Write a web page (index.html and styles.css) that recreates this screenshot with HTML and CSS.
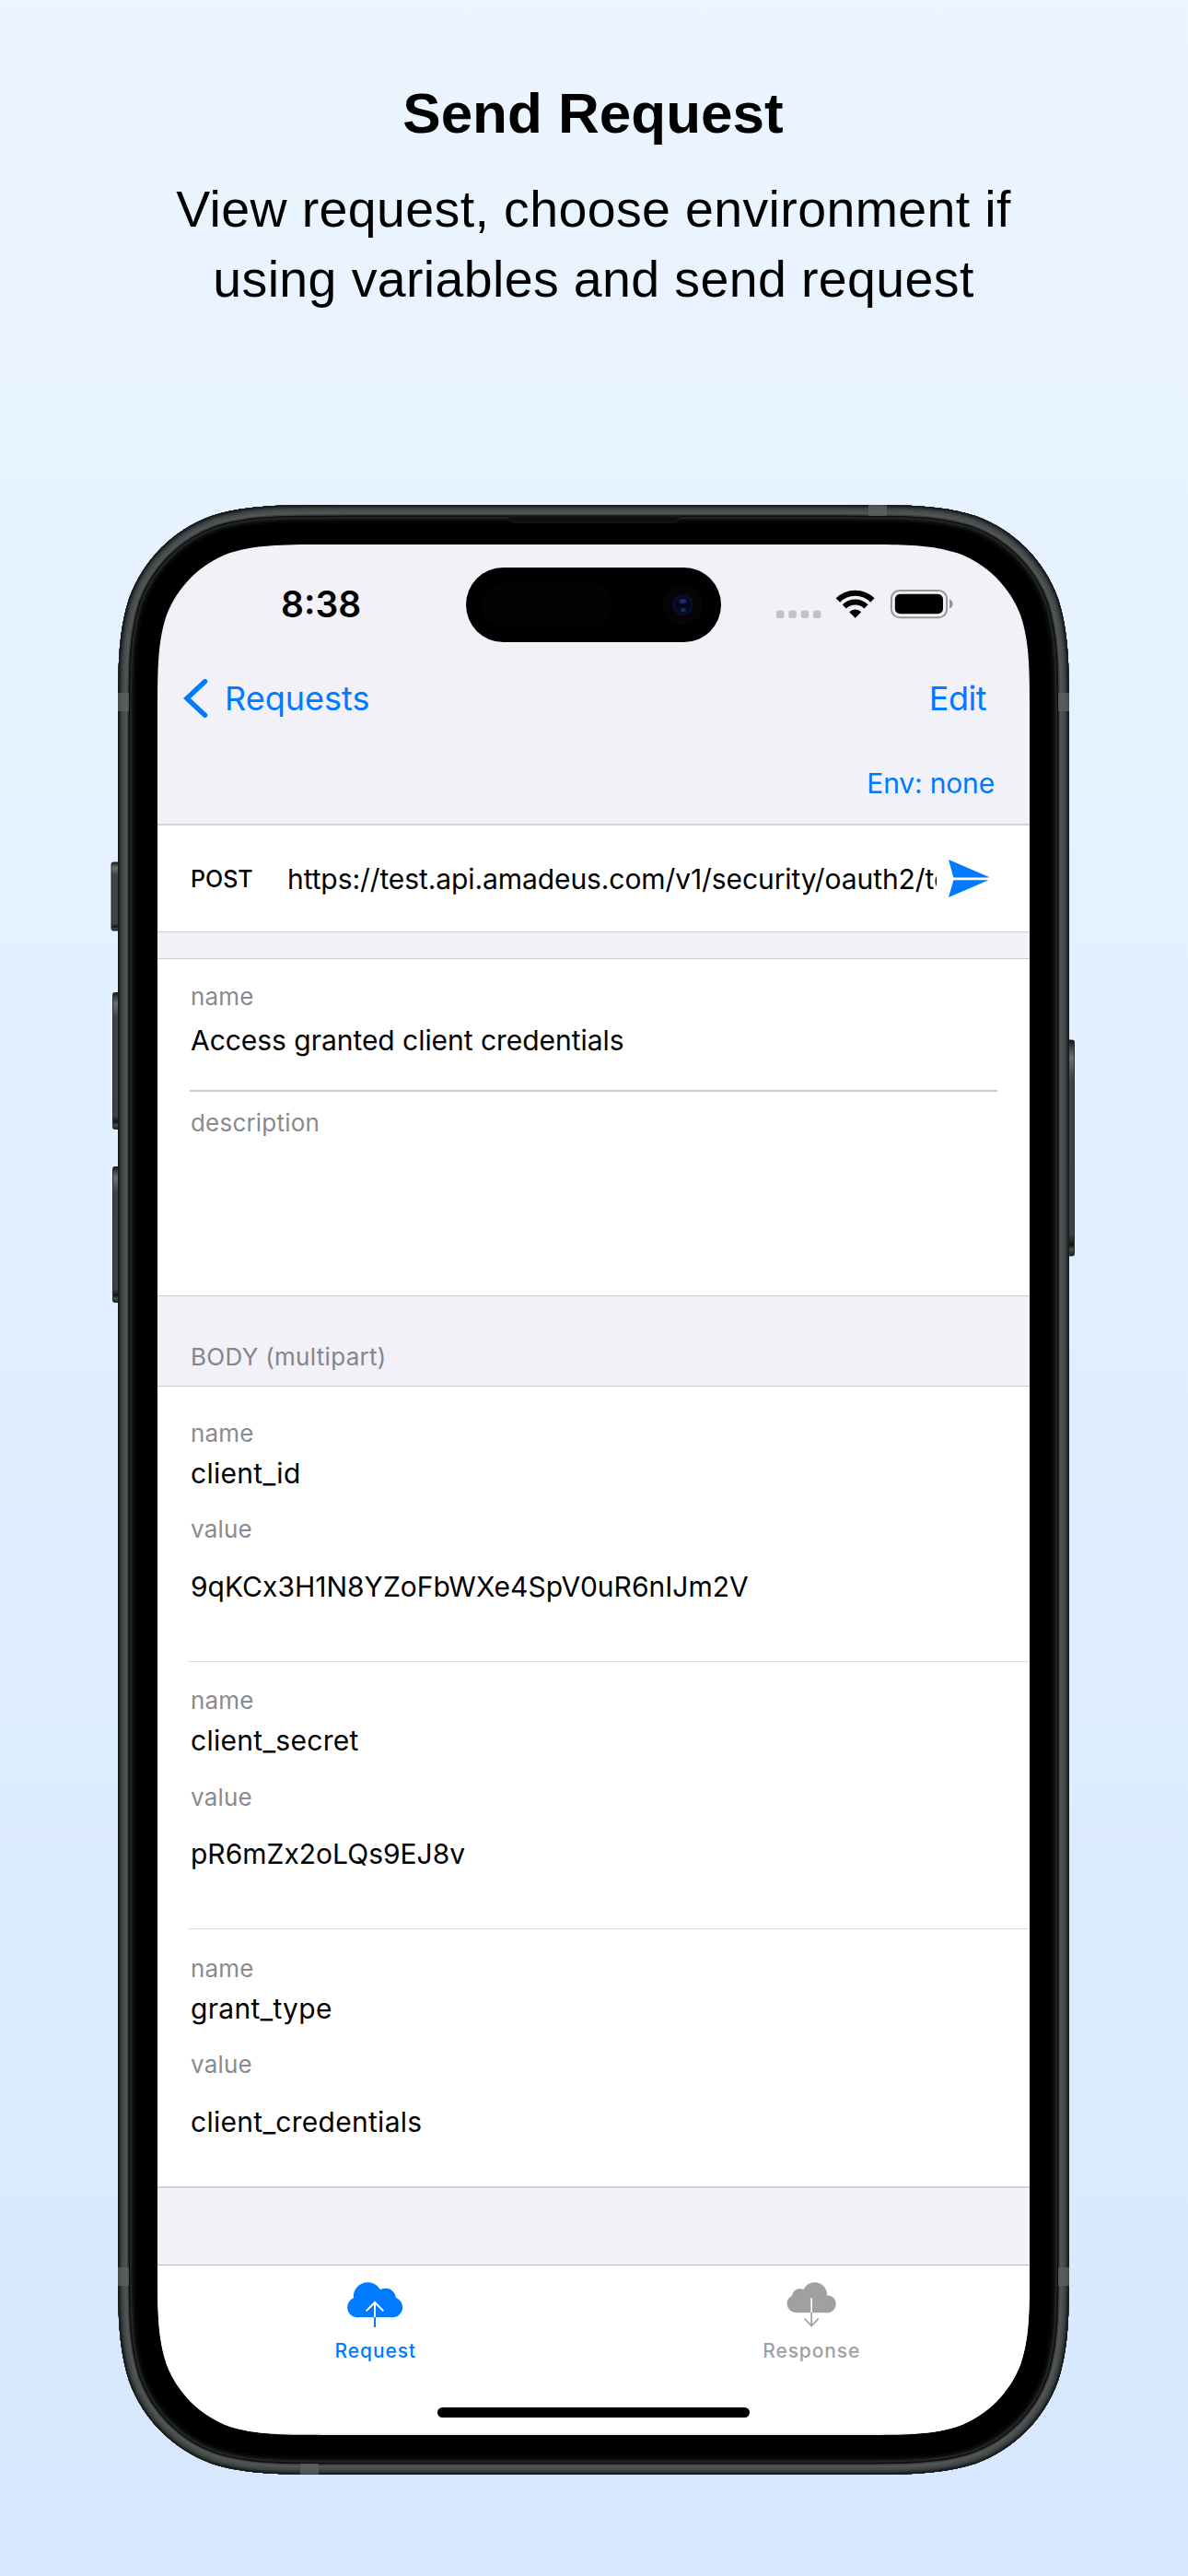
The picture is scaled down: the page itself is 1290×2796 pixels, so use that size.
FILE: index.html
```html
<!DOCTYPE html>
<html lang="en">
<head>
<meta charset="utf-8">
<title>Send Request</title>
<link rel="stylesheet" href="styles.css">
</head>
<body>
<header class="intro">
  <h1 class="title">Send Request</h1>
  <p class="subtitle">View request, choose environment if<br>using variables and send request</p>
</header>

<main class="phone">
  <svg class="frame" viewBox="-10 0 1053 2138" aria-hidden="true">
    <defs>
      <path id="body" d="M246.1 0H786.9C857.8 0 893.2 0 931.3 12.1C973 27.2 1005.8 60 1020.9 101.7C1033 139.8 1033 175.2 1033 246.1V1891.9C1033 1962.8 1033 1998.2 1020.9 2036.3C1005.8 2078 973 2110.8 931.3 2125.9C893.2 2138 857.8 2138 786.9 2138H246.1C175.2 2138 139.8 2138 101.7 2125.9C60 2110.8 27.2 2078 12.1 2036.3C0 1998.2 0 1962.8 0 1891.9V246.1C0 175.2 0 139.8 12.1 101.7C27.2 60 60 27.2 101.7 12.1C139.8 0 175.2 0 246.1 0Z"/>
      <clipPath id="bodyClip"><use href="#body"/></clipPath>
      <linearGradient id="btn" x1="0" y1="0" x2="0" y2="1">
        <stop offset="0" stop-color="#15181a"/><stop offset=".03" stop-color="#3a3e40"/><stop offset=".08" stop-color="#6c7072"/><stop offset=".18" stop-color="#3f4345"/>
        <stop offset=".9" stop-color="#3f4345"/><stop offset=".95" stop-color="#121416"/><stop offset=".97" stop-color="#4a4e50"/><stop offset="1" stop-color="#1c1f20"/>
      </linearGradient>
    </defs>
    <g fill="url(#btn)" stroke="#24282a" stroke-width="1">
      <rect x="-7" y="388" width="10" height="74" rx="2"/>
      <rect x="-5.5" y="529.5" width="9" height="148" rx="2"/>
      <rect x="-5.5" y="718.5" width="9" height="147" rx="2"/>
      <rect x="1030" y="581" width="8.5" height="234" rx="2"/>
    </g>
    <use href="#body" fill="#000"/>
    <g clip-path="url(#bodyClip)" fill="none">
      <use href="#body" stroke="#050505" stroke-width="40"/>
      <use href="#body" stroke="#0d0d0d" stroke-width="35"/>
      <use href="#body" stroke="#181818" stroke-width="32"/>
      <use href="#body" stroke="#262626" stroke-width="29"/>
      <use href="#body" stroke="#0c0d0d" stroke-width="26"/>
      <use href="#body" stroke="#3c4041" stroke-width="23"/>
      <use href="#body" stroke="#505556" stroke-width="20"/>
      <use href="#body" stroke="#474c4d" stroke-width="15"/>
      <use href="#body" stroke="#3a3f40" stroke-width="10"/>
      <use href="#body" stroke="#2a2e2f" stroke-width="6"/>
      <use href="#body" stroke="#181b1c" stroke-width="3"/>
      <path d="M423 13H611L608 17Q607 19 604 19H430Q427 19 426 17Z" fill="#0e0f0f" stroke="#1d1f1f" stroke-width="1"/>
      <g fill="#5c6163" fill-opacity=".75">
        <rect x="0" y="204" width="12" height="20"/>
        <rect x="1021" y="204" width="12" height="20"/>
        <rect x="0" y="1913" width="12" height="20"/>
        <rect x="1021" y="1913" width="12" height="20"/>
        <rect x="815" y="0" width="20" height="12"/>
        <rect x="198" y="2126" width="20" height="12"/>
      </g>
    </g>
  </svg>

  <div class="screen">
    <div class="status">
      <span class="time">8:38</span>
      <svg class="island" viewBox="0 0 277 81" aria-hidden="true">
        <rect width="277" height="81" rx="40.5"/>
        <rect x="17" y="17" width="142" height="48" rx="24" fill="#030303"/>
        <circle cx="235.5" cy="40.5" r="22" fill="#080307"/>
        <circle cx="235.5" cy="40.5" r="11.5" fill="#0b0c2c"/>
        <circle cx="235.5" cy="40.5" r="8" fill="#07071c"/>
        <ellipse cx="235.5" cy="36.5" rx="4" ry="2.5" fill="#22286a"/>
        <ellipse cx="236" cy="46" rx="3" ry="2" fill="#0c3540"/>
      </svg>
      <svg class="indicators" viewBox="843 638 194 33" aria-hidden="true">
        <g fill="#c2c1c6">
          <rect x="843" y="661.5" width="8.5" height="8.5" rx="2.5"/>
          <rect x="856.3" y="661.5" width="8.5" height="8.5" rx="2.5"/>
          <rect x="869.7" y="661.5" width="8.5" height="8.5" rx="2.5"/>
          <rect x="882.9" y="661.5" width="8.5" height="8.5" rx="2.5"/>
        </g>
        <g fill="none" stroke="#000">
          <path d="M909.9 650.5A26.5 26.5 0 0 1 947.4 650.5" stroke-width="6.2"/>
          <path d="M916.8 657.3A17 17 0 0 1 940.5 657.3" stroke-width="5.8"/>
        </g>
        <path d="M928.7 669.7L922.2 663.2A9.4 9.4 0 0 1 935.2 663.2Z"/>
        <rect x="967.9" y="639.9" width="60.2" height="29.4" rx="9" fill="none" stroke="#95959a" stroke-width="2"/>
        <rect x="971.8" y="643.8" width="52.2" height="21.4" rx="5.5"/>
        <path d="M1031.2 649.5A5.5 5.5 0 0 1 1031.2 659.5Z" fill="#8b8b90"/>
      </svg>
    </div>

    <nav class="nav">
      <a class="back"><svg class="chevron" viewBox="0 0 27 42" aria-hidden="true"><path d="M23.5 2.7L4 21L23.5 39.3" fill="none" stroke="#007aff" stroke-width="5.4" stroke-linecap="round" stroke-linejoin="miter"/></svg><span>Requests</span></a>
      <a class="edit">Edit</a>
    </nav>
    <div class="env"><a>Env: none</a></div>

    <div class="url-row">
      <span class="method">POST</span>
      <span class="url">https://test.api.amadeus.com/v1/security/oauth2/token</span>
      <svg class="send" viewBox="0 0 44 41" aria-hidden="true"><path d="M0 0L43.5 18.7L43.5 19.5H5.4ZM5.4 22.2H43.5L0 41Z" fill="#007aff"/></svg>
    </div>

    <section class="info">
      <label class="label">name</label>
      <div class="value">Access granted client credentials</div>
      <hr class="rule">
      <label class="label">description</label>
    </section>

    <h2 class="section-head">BODY (multipart)</h2>

    <section class="params">
      <div class="param">
        <label class="label">name</label>
        <div class="value wide">client_id</div>
        <label class="label">value</label>
        <div class="value">9qKCx3H1N8YZoFbWXe4SpV0uR6nIJm2V</div>
      </div>
      <div class="param">
        <label class="label">name</label>
        <div class="value wide">client_secret</div>
        <label class="label">value</label>
        <div class="value">pR6mZx2oLQs9EJ8v</div>
      </div>
      <div class="param">
        <label class="label">name</label>
        <div class="value wide">grant_type</div>
        <label class="label">value</label>
        <div class="value wide">client_credentials</div>
      </div>
    </section>

    <footer class="tabs">
      <div class="tab active">
        <svg class="tab-icon" viewBox="51 51 180 150" aria-hidden="true">
          <g fill="currentColor"><circle cx="84" cy="133" r="32.5"/><circle cx="118" cy="98" r="46.5"/><circle cx="176" cy="105" r="33.5"/><circle cx="199" cy="133" r="32.5"/><rect x="84" y="105" width="115" height="60.5"/></g>
          <path d="M141 165V118M113 145L141 117L169 145" fill="none" stroke="#fff" stroke-width="6"/>
          <path d="M141 165V198" stroke="currentColor" stroke-width="6"/>
        </svg>
        <span>Request</span>
      </div>
      <div class="tab">
        <svg class="tab-icon" viewBox="92 51 180 150" aria-hidden="true">
          <g fill="currentColor"><circle cx="132" cy="121" r="29.5"/><circle cx="145" cy="98" r="26"/><circle cx="193" cy="92" r="40"/><circle cx="234" cy="122" r="28.5"/><rect x="132" y="100" width="102" height="50.5"/></g>
          <path d="M182.5 150V103" stroke="#fff" stroke-width="5"/>
          <path d="M182.5 150V194M160 170L182.5 193.5L205 170" fill="none" stroke="currentColor" stroke-width="5"/>
        </svg>
        <span>Response</span>
      </div>
      <div class="home"></div>
    </footer>
  </div>
</main>
</body>
</html>
```
FILE: styles.css
```css
* { box-sizing: border-box; margin: 0; padding: 0; }

body {
  width: 1290px;
  height: 2796px;
  overflow: hidden;
  background: linear-gradient(#ebf5ff, #d6e8ff);
  color: #000;
  font-family: Inter, "Liberation Sans", sans-serif;
}

svg { display: block; flex: none; }

.intro {
  height: 548px;
  padding-top: 88px;
  text-align: center;
  font-family: "Liberation Sans", Arial, sans-serif;
}
.title { margin-left: -2px; font-size: 62px; line-height: 70px; font-weight: 700; }
.subtitle { margin: 31px 0 0 -1px; font-size: 55.5px; line-height: 76px; letter-spacing: .37px; }

.phone {
  position: relative;
  width: 1033px;
  height: 2138px;
  margin: 0 0 0 128px;
  padding: 43px;
}
.frame { position: absolute; left: -10px; top: 0; width: 1053px; height: 2138px; }

.screen {
  position: relative;
  width: 947px;
  height: 2052px;
  background: #f2f1f7;
  clip-path: path("M189.6 0H757.4C812 0 839.3 0 868.7 9.3C900.8 21 926 46.2 937.7 78.3C947 107.7 947 135 947 189.6V1862.4C947 1917 947 1944.3 937.7 1973.7C926 2005.8 900.8 2031 868.7 2042.7C839.3 2052 812 2052 757.4 2052H189.6C135 2052 107.7 2052 78.3 2042.7C46.2 2031 21 2005.8 9.3 1973.7C0 1944.3 0 1917 0 1862.4V189.6C0 135 0 107.7 9.3 78.3C21 46.2 46.2 21 78.3 9.3C107.7 0 135 0 189.6 0Z");
}

.status {
  display: grid;
  grid-template-columns: 335px 277px 1fr;
  align-items: center;
  height: 128px;
}
.time { padding: 1px 0 0 134px; font-size: 39px; font-weight: 600; line-height: 48px; }
.island { width: 277px; height: 81px; margin-top: 3px; }
.indicators { width: 194px; height: 33px; margin-left: 60px; }

.nav {
  display: flex;
  align-items: center;
  justify-content: space-between;
  height: 76px;
  padding: 1px 47px 0 28px;
  color: #007aff;
  font-size: 36px;
  line-height: 46px;
}
.back { display: flex; align-items: center; gap: 18px; }
.chevron { width: 27px; height: 42px; }
.edit { letter-spacing: -.5px; }

.env {
  display: flex;
  align-items: center;
  justify-content: flex-end;
  height: 101px;
  padding: 10px 38px 0 0;
  border-bottom: 2px solid #d2d1d8;
  color: #007aff;
  font-size: 30px;
  line-height: 40px;
  letter-spacing: -.17px;
}

.url-row {
  display: flex;
  align-items: center;
  height: 116px;
  padding: 0 44px 0 36px;
  border-bottom: 1px solid #cbcad0;
  background: #fff;
}
.method { width: 105px; font-size: 25px; font-weight: 500; line-height: 32px; }
.url { flex: 1; overflow: hidden; white-space: nowrap; font-size: 30px; line-height: 40px; letter-spacing: -.09px; }
.send { width: 44px; height: 41px; margin: 0 0 0 13px; }

.info {
  height: 367px;
  margin-top: 28px;
  padding: 25px 35px 0;
  border-top: 1px solid #cbcad0;
  border-bottom: 1px solid #cbcad0;
  background: #fff;
}
.label { display: block; padding-left: 1px; color: #8a8a8e; font-size: 26px; line-height: 32px; letter-spacing: .2px; }
.value { padding-left: 1px; font-size: 30px; line-height: 40px; white-space: nowrap; }
.value.wide { letter-spacing: .28px; }
.info .value { margin-top: 11px; letter-spacing: -.04px; }
.rule { height: 2px; margin: 34px 0 18px; border: 0; background: #cbcbcf; }

.section-head {
  height: 98px;
  padding: 50px 36px 0;
  border-bottom: 1px solid #cbcad0;
  color: #85858b;
  font-size: 26px;
  font-weight: 400;
  line-height: 32px;
  letter-spacing: .3px;
}

.params {
  height: 870px;
  padding-top: 8px;
  border-bottom: 2px solid #d2d1d8;
  background: #fff;
}
.param { height: 290.5px; margin-left: 33px; padding: 26.5px 0 0 2px; border-bottom: 1px solid #dcdcdf; }
.param:last-child { border-bottom: 0; }
.param .label + .value { margin-top: 7px; }
.param .value + .label { margin-top: 25.5px; }
.param .value + .label + .value { margin-top: 25.5px; }

.tabs {
  position: relative;
  display: grid;
  grid-template-columns: 1fr 1fr;
  height: 183px;
  margin-top: 83px;
  padding-top: 18px;
  border-top: 1px solid #bbbbc0;
  background: #fff;
}
.tab {
  display: flex;
  flex-direction: column;
  align-items: center;
  gap: 11px;
  color: #a0a0a0;
  font-size: 21px;
  font-weight: 500;
  line-height: 28px;
  letter-spacing: .9px;
}
.tab.active { color: #007aff; }
.tab-icon { width: 60px; height: 50px; margin-right: 1px; }
.home { position: absolute; left: 304px; top: 154px; width: 339px; height: 11px; border-radius: 6px; background: #000; }
```
